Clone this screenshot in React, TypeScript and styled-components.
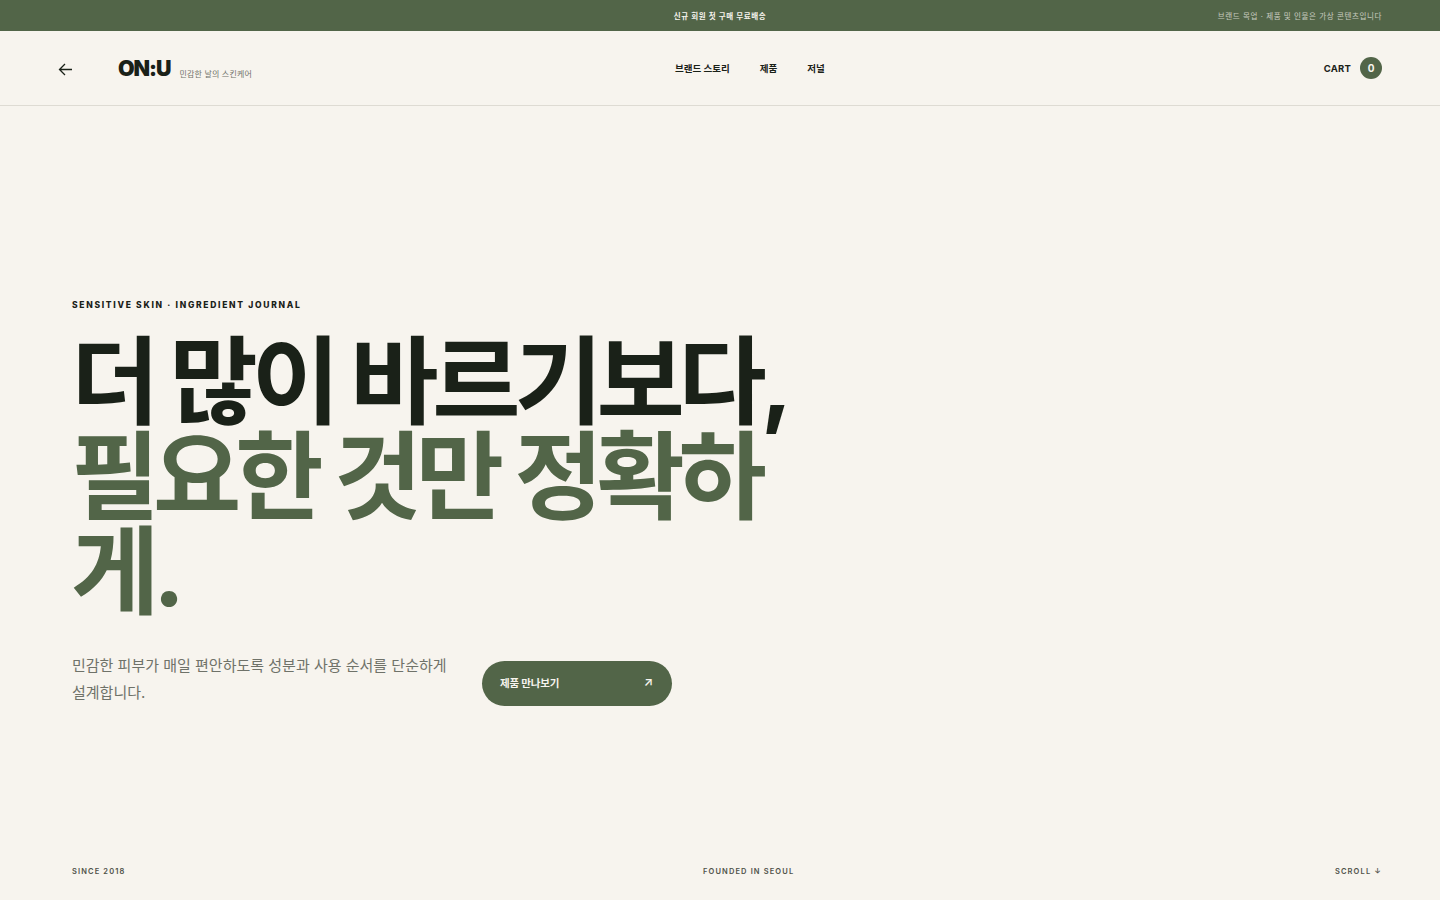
import React from "react";
import styled, { createGlobalStyle } from "styled-components";

const Global = createGlobalStyle`
  html, body { margin: 0; padding: 0; background: #f7f4ee; }
  * { box-sizing: border-box; }
  body { font-family: Inter, "Noto Sans CJK KR", sans-serif; color: #1a2118; }
`;
const Page = styled.div`
  height: 900px; display: flex; flex-direction: column; overflow: hidden;
`;
const TopBar = styled.div`
  height: 31px; background: #526548; display: grid; grid-template-columns: 1fr auto 1fr;
  align-items: center; padding: 0 58px; font-size: 7.5px; letter-spacing: 0.08em; color: #f7f4ee;
`;
const Promo = styled.span` grid-column: 2; font-weight: 600; `;
const Notice = styled.span` justify-self: end; opacity: 0.7; `;
const Nav = styled.header`
  height: 75px; border-bottom: 1px solid #dedbd3; display: grid; grid-template-columns: 617px auto 1fr;
  align-items: center; padding: 0 58px;
`;
const Left = styled.div` display: flex; align-items: center; `;
const Back = styled.button`
  all: unset; width: 15px; height: 15px; margin: 2px 45px 0 0; display: flex; color: #1a2118;
`;
const Logo = styled.span`
  font-size: 21.5px; font-weight: 900; letter-spacing: -0.05em; line-height: 1; margin-top: 2px;
`;
const Tag = styled.span`
  margin: 0 0 1px 9px; font-size: 8px; letter-spacing: 0.02em; color: #6f7269; align-self: flex-end;
`;
const Links = styled.nav` display: flex; gap: 30px; font-size: 9.5px; font-weight: 700; `;
const Cart = styled.div`
  justify-self: end; display: flex; align-items: center; gap: 9px; font-size: 9.5px; font-weight: 700; letter-spacing: 0.02em;
`;
const Count = styled.span`
  width: 22px; height: 22px; border-radius: 50%; background: #526548; color: #f7f4ee;
  display: flex; align-items: center; justify-content: center; letter-spacing: 0; font-size: 10px;
`;
const Hero = styled.main`
  flex: 1; padding: 193px 58px 0 72px; display: flex; flex-direction: column;
`;
const Eyebrow = styled.div` font-size: 8.5px; font-weight: 800; letter-spacing: 0.2em; line-height: 12px; `;
const Title = styled.h1`
  margin: 23px 0 0 -1px; width: 730px; font-size: 96px; line-height: 95px; font-weight: 700; letter-spacing: -0.065em;
`;
const Accent = styled.span` color: #526548; `;
const Lower = styled.div` display: flex; align-items: flex-end; gap: 30px; margin-top: 33px; `;
const Lead = styled.p`
  margin: 0; width: 380px; font-size: 15px; line-height: 27px; color: #6f7269; font-weight: 400;
`;
const Cta = styled.a`
  width: 190px; height: 45px; border-radius: 23px; background: #526548; color: #f7f4ee;
  display: flex; align-items: center; justify-content: space-between; padding: 0 19px 2px 18px;
  font-size: 10.5px; font-weight: 600; letter-spacing: -0.02em;
`;
const CtaArrow = styled.span` font-size: 12px; line-height: 1; margin-bottom: 2px; `;
const Footer = styled.footer`
  display: grid; grid-template-columns: 631px auto 1fr; padding: 0 58px 22px 72px;
  font-size: 7.5px; font-weight: 600; letter-spacing: 0.15em; color: #4f5249; line-height: 12px;
`;
const End = styled.span` text-align: right; `;

export default function App() {
  return (
    <Page>
      <Global />
      <TopBar>
        <Promo>신규 회원 첫 구매 무료배송</Promo>
        <Notice>브랜드 목업 · 제품 및 인물은 가상 콘텐츠입니다</Notice>
      </TopBar>
      <Nav>
        <Left>
          <Back aria-label="뒤로">
            <svg width="15" height="15" viewBox="0 0 15 15" fill="none" stroke="currentColor" strokeWidth="1.3">
              <path d="M14 7.5H1.5M7 2 1.5 7.5 7 13" />
            </svg>
          </Back>
          <Logo>ON:U</Logo>
          <Tag>민감한 날의 스킨케어</Tag>
        </Left>
        <Links>
          <span>브랜드 스토리</span>
          <span>제품</span>
          <span>저널</span>
        </Links>
        <Cart>CART<Count>0</Count></Cart>
      </Nav>
      <Hero>
        <Eyebrow>SENSITIVE SKIN · INGREDIENT JOURNAL</Eyebrow>
        <Title>더 많이 바르기보다,<br /><Accent>필요한 것만 정확하게.</Accent></Title>
        <Lower>
          <Lead>민감한 피부가 매일 편안하도록 성분과 사용 순서를 단순하게 설계합니다.</Lead>
          <Cta>제품 만나보기<CtaArrow>↗</CtaArrow></Cta>
        </Lower>
      </Hero>
      <Footer>
        <span>SINCE 2018</span>
        <span>FOUNDED IN SEOUL</span>
        <End>SCROLL ↓</End>
      </Footer>
    </Page>
  );
}
